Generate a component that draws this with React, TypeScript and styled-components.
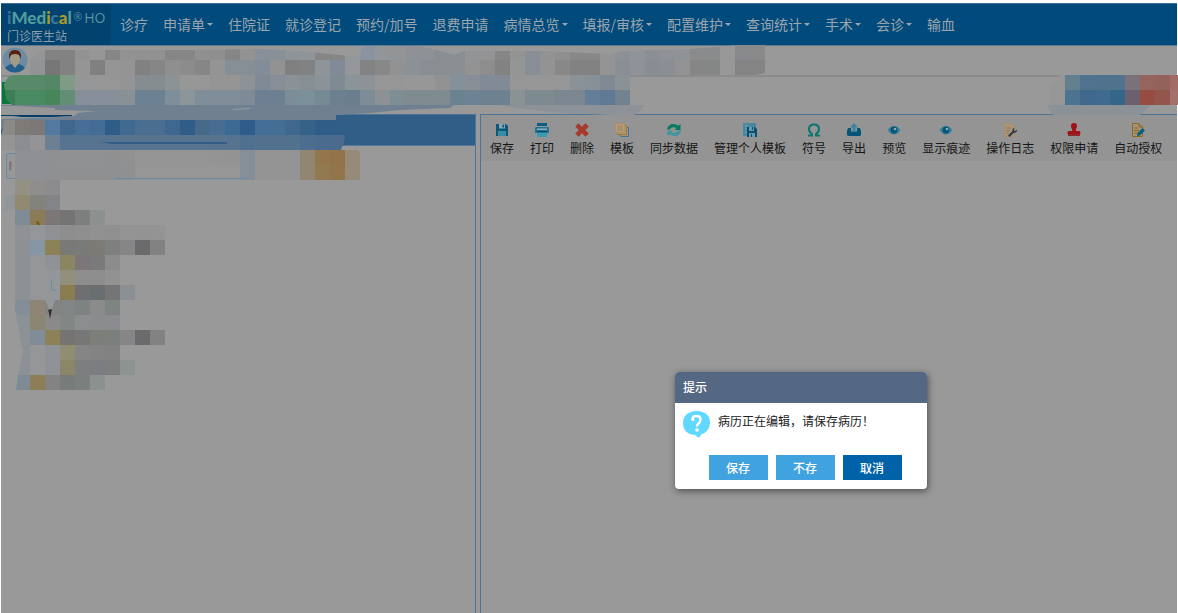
import React from "react";
import styled, { createGlobalStyle } from "styled-components";

const Global = createGlobalStyle`
  * { box-sizing: border-box; }
  body {
    margin: 0;
    background: #fff;
    font-family: "Noto Sans CJK SC", "Liberation Sans", sans-serif;
    font-size: 12px;
  }
  button, input { font-family: inherit; }
`;

const Page = styled.div`
  position: relative;
  min-height: 100vh;
  padding: 3px 1px 0;
  display: flex;
  flex-direction: column;
`;

const Header = styled.header`
  display: flex;
  height: 43px;
  background: #014a7c;
  border-top: 1px solid #3f6f96;
  border-bottom: 1px solid #5c7b96;
`;

const Brand = styled.div`
  width: 110px;
  padding: 4px 0 0 6px;
  background: #01426e;
  color: #8f9fab;
  font-size: 12px;
  line-height: 16px;
`;

const Logo = styled.div`
  display: flex;
  align-items: center;
  height: 20px;
  font-family: Lato, sans-serif;
  font-size: 17px;
  font-weight: 900;
  color: #4f9c9d;
`;

const LogoLetter = styled.span<{ $tone: string }>`
  color: ${(p) => p.$tone};
`;

const LogoMark = styled.span`
  margin: 0 2px 0 2px;
  font: 10px/18px "Open Sans", sans-serif;
  align-self: flex-start;
  color: #5f93a3;
`;

const LogoSuffix = styled.span`
  font: 14px/20px "Open Sans", sans-serif;
  color: #5b93a5;
`;

const Nav = styled.nav`
  display: flex;
  align-items: center;
  gap: 15px;
  padding: 0 0 2px 9px;
`;

const NavLink = styled.a`
  display: flex;
  align-items: center;
  color: #9ba5ad;
  font-size: 14px;
  line-height: 20px;
  text-decoration: none;
  white-space: nowrap;
`;

const Caret = styled.i`
  margin: 2px 0 0 2px;
  border: 3px solid transparent;
  border-top-color: #9ba5ad;
  border-bottom: 0;
`;

const Main = styled.div`
  flex: 1;
  display: flex;
  flex-direction: column;
  background: #999;
`;

const Banner = styled.section`
  height: 68px;
`;

const Patient = styled.div`
  height: 31px;
  padding: 1px 1px 0;
  border-bottom: 2px solid #8b8b8b;
`;

const Workspace = styled.div`
  flex: 1;
  display: flex;
  gap: 4px;
`;

const TreePanel = styled.aside`
  width: 475px;
  border: 1px solid #4b749b;
  border-width: 1px 1px 0 0;
`;

const TreeTitle = styled.div`
  height: 31px;
  background: #305e87;
  border-bottom: 1px solid #55799b;
`;

const SearchInput = styled.input`
  display: block;
  width: 294px;
  height: 26px;
  margin: 7px 0 0 5px;
  background: #999;
  border: 1px solid #6a8ba5;
  border-radius: 2px;
`;

const Editor = styled.main`
  flex: 1;
  min-width: 0;
  border: 1px solid #4b749b;
  border-width: 1px 0 0 1px;
`;

const Toolbar = styled.div`
  display: flex;
  gap: 16px;
  height: 46px;
  padding: 8px 0 0 9px;
  background: #949494;
`;

const Tool = styled.button`
  display: flex;
  flex-direction: column;
  align-items: center;
  gap: 2px;
  padding: 0;
  border: 0;
  background: none;
  color: #151515;
  font-size: 12px;
  line-height: 17px;
  white-space: nowrap;
`;

const Dialog = styled.section`
  position: absolute;
  left: 675px;
  top: 372px;
  width: 252px;
  border-radius: 4px;
  background: #fff;
  box-shadow: 1px 2px 7px rgba(0, 0, 0, 0.5);
  overflow: hidden;
`;

const DialogTitle = styled.h2`
  margin: 0;
  padding: 0 8px;
  height: 31px;
  background: #546783;
  color: #fff;
  font-size: 12px;
  font-weight: 500;
  line-height: 30px;
`;

const DialogBody = styled.div`
  display: flex;
  gap: 8px;
  padding: 8px 8px 0;
  height: 52px;
  color: #222;
  line-height: 20px;
`;

const DialogActions = styled.div`
  display: flex;
  justify-content: center;
  gap: 8px;
  padding: 0 0 9px 8px;
`;

const DialogButton = styled.button<{ $strong?: boolean }>`
  width: 59px;
  height: 25px;
  padding: 0;
  border: 0;
  background: ${(p) => (p.$strong ? "#0063a9" : "#40a2de")};
  color: #fff;
  font-size: 12px;
  font-weight: 500;
  line-height: 25px;
`;

const MaskLayer = styled.svg`
  position: absolute;
  left: 0;
  top: 0;
  pointer-events: none;
`;

const menu: [string, boolean][] = [
  ["诊疗", false],
  ["申请单", true],
  ["住院证", false],
  ["就诊登记", false],
  ["预约/加号", false],
  ["退费申请", false],
  ["病情总览", true],
  ["填报/审核", true],
  ["配置维护", true],
  ["查询统计", true],
  ["手术", true],
  ["会诊", true],
  ["输血", false],
];

const Icon = ({ children }: { children: React.ReactNode }) => (
  <svg width="14" height="14" viewBox="0 0 14 14" aria-hidden="true">
    {children}
  </svg>
);

const Eye = () => (
  <Icon>
    <path d="M0.5 7Q3.5 3 7 3Q10.500 3 13.500 7Q10.500 11.500 7 11.500Q3.500 11.500 .5 7Z" fill="#3d7f9c" />
    <circle cx="7" cy="7" r="3.400" fill="#045577" />
    <circle cx="8" cy="6" r="1.300" fill="#8eabb7" />
  </Icon>
);

const tools: [string, React.ReactNode][] = [
  ["保存", <Icon>
    <path d="M1 1H11L13 3V13H1Z" fill="#0b5877" />
    <path d="M4 1H10V5.500H4Z" fill="#8aa5b0" />
    <path d="M7.500 1.500H9V4.500H7.500Z" fill="#0b5877" />
    <path d="M3 8H11V13H3Z" fill="#3a8ba5" />
  </Icon>],
  ["打印", <Icon>
    <path d="M2 0H12V3H2Z" fill="#0b5f81" />
    <path d="M1 4H13Q14 4 14 6V10H0V6Q0 4 1 4Z" fill="#1f7394" />
    <path d="M2 5.500H12V7H2Z" fill="#95a8b0" />
    <path d="M2 9H12V14H2Z" fill="#3a9bb5" />
    <path d="M2 8H12V9.500H2Z" fill="#064a67" />
  </Icon>],
  ["删除", <Icon>
    <path d="M3.500 .3L7 3.700L10.500 .3L13.700 3.500L10.300 7L13.700 10.500L10.500 13.700L7 10.300L3.500 13.700L.3 10.500L3.700 7L.3 3.500Z" fill="#a63a2b" />
  </Icon>],
  ["模板", <Icon>
    <path d="M4.500 4.500H13.500V13.500H6L4.500 12Z" fill="#9c9686" stroke="#3f7894" />
    <path d="M2.500 2.500H11.500V11.500H2.500Z" fill="#b29a75" stroke="#a57732" />
    <path d="M.5 .5H9.500V9.500H.5Z" fill="#b59b78" stroke="#aa8c65" />
    <path d="M2 3H8M2 5H8M2 7H8" stroke="#9e8565" />
  </Icon>],
  ["同步数据", <Icon>
    <path d="M0 6.500Q1 1 6.500 1Q9.500 1 11.200 2.700L13.500 1V7H7.500L9.500 5Q5 3 2.800 6.500Z" fill="#08795f" />
    <path d="M14 7.500Q13 13 7.500 13Q4.500 13 2.800 11.300L.5 13V7.500H6.500L4.500 9.300Q9 11 11.200 7.500Z" fill="#3c97a0" />
  </Icon>],
  ["管理个人模板", <Icon>
    <path d="M0 0H13V13H0Z" fill="#4b879f" />
    <path d="M2 3H5M2 6H4M2 9H4" stroke="#7ba3b2" />
    <path d="M4 4H12L14 6V14H4Z" fill="#0a506e" />
    <path d="M6 4H11V8H6ZM6 10H12V14H6Z" fill="#6599ac" />
    <path d="M9 4H10V7H9ZM8 11H9V14H8Z" fill="#0a506e" />
  </Icon>],
  ["符号", <Icon>
    <path d="M1 12.500H5V11Q2 9 2 6Q2 1.500 7 1.500Q12 1.500 12 6Q12 9 9 11V12.500H13" fill="none" stroke="#08756f" strokeWidth="2" />
  </Icon>],
  ["导出", <Icon>
    <path d="M1 5H4V8.500H10V5H13L14 8V11.500Q14 13 12.500 13H1.500Q0 13 0 11.500V8Z" fill="#075576" />
    <path d="M7 0L11 4.500H8.500V8.500H5.500V4.500H3Z" fill="#3e849f" />
  </Icon>],
  ["预览", <Eye />],
  ["显示痕迹", <Eye />],
  ["操作日志", <Icon>
    <path d="M1.500 .5H8L11.500 4V13.500H1.500Z" fill="#a99678" stroke="#aa8c65" />
    <path d="M3 5H8M3 7.500H7M3 10H6" stroke="#92785a" />
    <path d="M5 12.500L9.500 8Q8.700 5.500 11.500 4.700L10.700 7L12 8L14 6.500Q14 10 11 9.800L6.500 14Z" fill="#343a4b" />
  </Icon>],
  ["权限申请", <Icon>
    <path d="M7 0Q10 0 10 3Q10 4.500 8.800 6.500V8H12Q13.500 8 13.500 10V11H.5V10Q.5 8 2 8H5.200V6.500Q4 4.500 4 3Q4 0 7 0Z" fill="#a01216" />
    <path d="M1 11H13V13H1Z" fill="#8c2a2b" />
  </Icon>],
  ["自动授权", <Icon>
    <path d="M1.500 .5H8L11.500 4V13.500H1.500Z" fill="#a39478" stroke="#8e681e" />
    <path d="M8 .5V4H11.500M3 5H7M3 7.500H8M3 10H6" fill="none" stroke="#8e681e" />
    <path d="M6 13L6.500 10L11.500 5L14 7.500L9 12.500Z" fill="#0d5d7d" />
  </Icon>],
];

const CELL = 15;

type Run = { x: number; y: number; cells: string };

const headMosaic: Run[] = [
  { x: 2, y: 45, cells: "949596 828282 828282 929292 969696 868686 929292 919191 919191 868686 868686 909090 8f8f8f 868686 929292 88909a 88909a 8f9498 8f9498 868686 868686 92979b 8a93a0 939699 929496 8e9297 8e9297 8a8e93 8a8e93 929496 929496 868686 949494 898d95 929292 8f8f8f 888888 888888 949494 8d9095 909397 8b8e94 8e9196 909396 8a8b8c 8a8b8d 989898 888a8e 8a8a8b" },
  { x: 2, y: 60, cells: "929395 777777 828282 959595 808080 959595 949494 818181 868686 8f8f8f 8c8c8c 868686 949494 868e96 868e96 858c99 929292 808080 828282 8f9498 818a98 949699 838383 888888 929292 8c9197 8a8e93 8a8e93 8a8e93 939393 8d8d8d 828282 959595 898d95 939393 888888 828282 828282 949494 8b8e95 8f9297 888c93 8b8e93 939393 868686 858786 989898 848484 848484" },
  { x: 0, y: 75, cells: "568a68 568a68 568a68 548765 809a88 959697 969696 969696 929496 858d91 858d91 8d9294 979797 979797 959595 959595 8d9296 808996 888e98 8b9296 868f93 8b9398 7f8a92 8b9499 8d9296 969696 969696 979797 979797 929292 84919a 878e95 828a96 828a96 969696 969696 969696 969696 8a9298 878f97 808994 8a9296" },
  { x: 0, y: 90, cells: "3c7f56 4a8a62 4a8a62 478659 648d75 868f99 868f99 868f99 8a9196 6c8192 6c8192 7f8e9b 8c9599 808e99 808e99 808e99 7e8b97 6d8091 6d8091 7c8c99 7c9099 768a96 6c8090 6a7e90 7d8c96 8c9294 7f8d95 7f8b91 7f8b91 7f8b91 6a8391 6d8292 6e8191 6e8191 8a9393 7d8a91 7d8a90 7b8690 7b8690 637f98 607a96 72828f" },
];

const panelMosaic: Run[] = [
  { x: 0, y: 120, cells: "8a8a86 7e7a78 7c7876 52799f 40688f 476e96 456c94 2f5c88 416a90 4a6e90 4a6e90 3f6790 2f5c88 47698a 476e92 3c6a94 2f5c8a 456e96 456e94 40688f 36628a 305d88 305d88" },
  { x: 0, y: 135, cells: "949494 8c8d90 949496 6d7f93 56748f 56748f 56748f 56748f 56748f 56748f 56748f 56748f 56748f 56748f 56748f 56748f 4f708f 52718f 52718f 52718f 4c6d8e 4a6b8d 4a6b8d" },
];

const treeMosaic: Run[] = [
  { x: 1, y: 150, cells: "8f9093 8f9093 8f9093 909192 909192 909192 8f9091 919191 959595 959595 959595 959595 959595 949494 939393 868e97 949494 949494 949494 908672 93764b 93744a 968a78" },
  { x: 1, y: 165, cells: "8f9093 8f9093 8f9093 8f9091 8f9091 8f9091 8f9091 8f9091 969696 969696 969696 969696 969696 969696 969696 868e97 949494 949494 949494 908672 937950 92754a 968a78" },
  { x: 1, y: 180, cells: "929184 8f8e8c 8c8c8e" },
  { x: 0, y: 195, cells: "90969a 8f8a70 82837d 828488" },
  { x: 1, y: 210, cells: "808b98 8c7c55 7c7777 747474 7c7f7e 8d9090" },
  { x: 1, y: 225, cells: "8f9194 94969a 8f9194 8d8d8d 8f8f8f 919191 909090 949494 939393 949494" },
  { x: 1, y: 240, cells: "8d9195 8596a4 8d8158 797977 787b79 7c7b76 7d807e 868686 6b6b6d 828282" },
  { x: 1, y: 255, cells: "8d9195 949698 8f9296 8b8561 7a767a 7a7a7a 8c8c8c" },
  { x: 1, y: 270, cells: "8d9195 949698 93969a 918f7c 8d8d8e 8d8d8d 929292" },
  { x: 1, y: 285, cells: "8d9195 949698 93969a 897d50 6f6f71 6b6e71 757575 8c8f94" },
  { x: 1, y: 300, cells: "838f98 8f8577 838383 828585 7e8281 8b8b8b 7f8483" },
  { x: 1, y: 315, cells: "8a9296 8b8671 8a8a8a 828786 8a8e8e 8a8c8e 8a8c90" },
  { x: 1, y: 330, cells: "8d9195 808d99 8d8158 757472 777777 7c7f79 7c807d 868686 6b6b6d 828282" },
  { x: 1, y: 345, cells: "8d9195 949698 8f9296 918d70 858585 838383 828282" },
  { x: 1, y: 360, cells: "8d9195 949698 8f9296 8c8668 7c7f7f 7b7d81 7e7e7e 8f9292" },
  { x: 1, y: 375, cells: "7d8b97 8c7e55 838383 777b79 7b807e 8c9090" },
];

const actionMosaic: Run[] = [
  { x: 71, y: 75, cells: "64808f 527390 50728c 50728c 7b717b 95645c 93625a a26c64" },
  { x: 71, y: 90, cells: "4c7390 40688c 416a90 336689 6c5f6e 964c40 93564c a3716b" },
];

const Mosaic = ({ runs }: { runs: Run[] }) => (
  <g shapeRendering="crispEdges">
    {runs.map((run) =>
      run.cells.split(" ").map((tone, i) => (
        <rect
          key={`${run.y}-${i}`}
          x={(run.x + i) * CELL}
          y={run.y}
          width={CELL}
          height={CELL}
          fill={`#${tone}`}
        />
      ))
    )}
  </g>
);

const PrivacyMask = () => (
  <MaskLayer width="1178" height="400" viewBox="0 0 1178 400" aria-hidden="true">
    <defs>
      <clipPath id="head">
        <path d="M4 84L9 76L14 75H30L28 70L30 60L36 53L45 50H190L260 49L300 51L340 55L360 57L361 49L366 46H420L440 51L454 55L464 51H540L610 54L622 51L690 49L740 45H770L771 58L765 73L750 76L630 84V105H12L6 99Z" />
      </clipPath>
      <clipPath id="title">
        <path d="M1 136L5 120H335L345 136L344 142L341 150H1Z" />
      </clipPath>
      <clipPath id="tree">
        <path d="M15 150H357L360 152V180H240V240H170V350H140V390H16L18 376L23 352L15 310L8 280L5 225V195L12 180Z" />
      </clipPath>
    </defs>
    <path d="M1 105H100L455 104L450 108L400 110L370 113L336 115V120H12L7 124L1 130Z" fill="#708090" />
    <path d="M1 106H16L55 108V110L96 111L78 113L74 116L66 117L30 118L12 119H1Z" fill="#979797" />
    <path d="M1 115H72V116L52 117H22L13 116H1Z" fill="#023e69" />
    <path d="M233 109L250 108V109L233 110Z" fill="#999" />
    <path d="M500 105H645L639 112L634 115H611L560 113L515 108Z" fill="#8c9297" />
    <path d="M2 82H7L5 88L7 98L14 104H2Z" fill="#06783a" />
    <g clipPath="url(#head)"><Mosaic runs={headMosaic} /></g>
    <g clipPath="url(#title)"><Mosaic runs={panelMosaic} /></g>
    <path d="M100 142H227V144H112Z" fill="#315e88" />
    <g clipPath="url(#tree)"><Mosaic runs={treeMosaic} /></g>
    <path d="M115 178.500H249" stroke="#6a8ba5" />
    <path d="M16 153.500H8L6.500 155V177L8 178.500H11" fill="#979797" stroke="#6a8ba5" />
    <path d="M9 161L12 162L11 171L9 170Z" fill="#827878" />
    <path d="M36 221L39 222L40 225H37Z" fill="#7c5d13" />
    <path d="M45 270H55V300L52 309H49L45 300Z" fill="#94979a" />
    <path d="M51.500 279V290H56" fill="none" stroke="#6b8ca3" />
    <path d="M48 310L52 309L51 314L50 319L49 313Z" fill="#332c26" />
    <path d="M1047 105H1151L1145 111L1140 115H1053Z" fill="#8a9298" />
    <path d="M1060 75L1050 89V105H1065V75Z" fill="#969696" />
    <Mosaic runs={actionMosaic} />
  </MaskLayer>
);

const Avatar = () => (
  <svg width="26" height="26" viewBox="0 0 26 26" role="img" aria-label="患者">
    <circle cx="13" cy="13" r="12.500" fill="#6d8ba3" />
    <path d="M3 21Q6 17 11 17H15Q20 17 23 21Q19 25.500 13 25.500Q7 25.500 3 21Z" fill="#245f8c" />
    <path d="M9 16L13 21L17 16Z" fill="#a39b88" />
    <ellipse cx="13" cy="11.500" rx="5" ry="6" fill="#a39b88" />
    <path d="M7 12Q6 3 13 3Q20 3 19 12L17 8Q13 6 9 8Z" fill="#57210f" />
  </svg>
);

const Question = () => (
  <svg width="27" height="28" viewBox="0 0 27 28" aria-hidden="true">
    <path d="M13.500 0Q27 .5 27 12Q26.500 21 18 23.500L16 27L12 24Q0 23 0 12Q.5 .5 13.500 0Z" fill="#61d8ff" />
    <path d="M9.500 9Q9 5 13.500 5Q17.500 5 17.500 8.500Q17.500 11 15.500 12.500Q14 13.500 14 15.500" fill="none" stroke="#fff" strokeWidth="2.500" />
    <circle cx="10" cy="8.500" r="1.600" fill="#fff" />
    <circle cx="14" cy="19" r="1.800" fill="#fff" />
  </svg>
);

export default function App() {
  return (
    <Page>
      <Global />
      <Header>
        <Brand>
          <Logo>
            <LogoLetter $tone="#3a7097">i</LogoLetter>
            <LogoLetter $tone="#4f9c9d">Med</LogoLetter>
            <LogoLetter $tone="#a79c29">i</LogoLetter>
            <LogoLetter $tone="#347ba0">c</LogoLetter>
            <LogoLetter $tone="#a79c29">a</LogoLetter>
            <LogoLetter $tone="#4f9c9d">l</LogoLetter>
            <LogoMark>®</LogoMark>
            <LogoSuffix>HO</LogoSuffix>
          </Logo>
          门诊医生站
        </Brand>
        <Nav>
          {menu.map(([label, hasMenu]) => (
            <NavLink href="#" key={label}>
              {label}
              {hasMenu && <Caret />}
            </NavLink>
          ))}
        </Nav>
      </Header>
      <Main>
        <Banner>
          <Patient>
            <Avatar />
          </Patient>
        </Banner>
        <Workspace>
          <TreePanel>
            <TreeTitle />
            <SearchInput aria-label="搜索" />
          </TreePanel>
          <Editor>
            <Toolbar>
              {tools.map(([label, icon]) => (
                <Tool type="button" key={label}>
                  {icon}
                  {label}
                </Tool>
              ))}
            </Toolbar>
          </Editor>
        </Workspace>
      </Main>
      <PrivacyMask />
      <Dialog role="dialog" aria-labelledby="dialog-title">
        <DialogTitle id="dialog-title">提示</DialogTitle>
        <DialogBody>
          <Question />
          病历正在编辑，请保存病历！
        </DialogBody>
        <DialogActions>
          <DialogButton type="button">保存</DialogButton>
          <DialogButton type="button">不存</DialogButton>
          <DialogButton type="button" $strong>取消</DialogButton>
        </DialogActions>
      </Dialog>
    </Page>
  );
}
